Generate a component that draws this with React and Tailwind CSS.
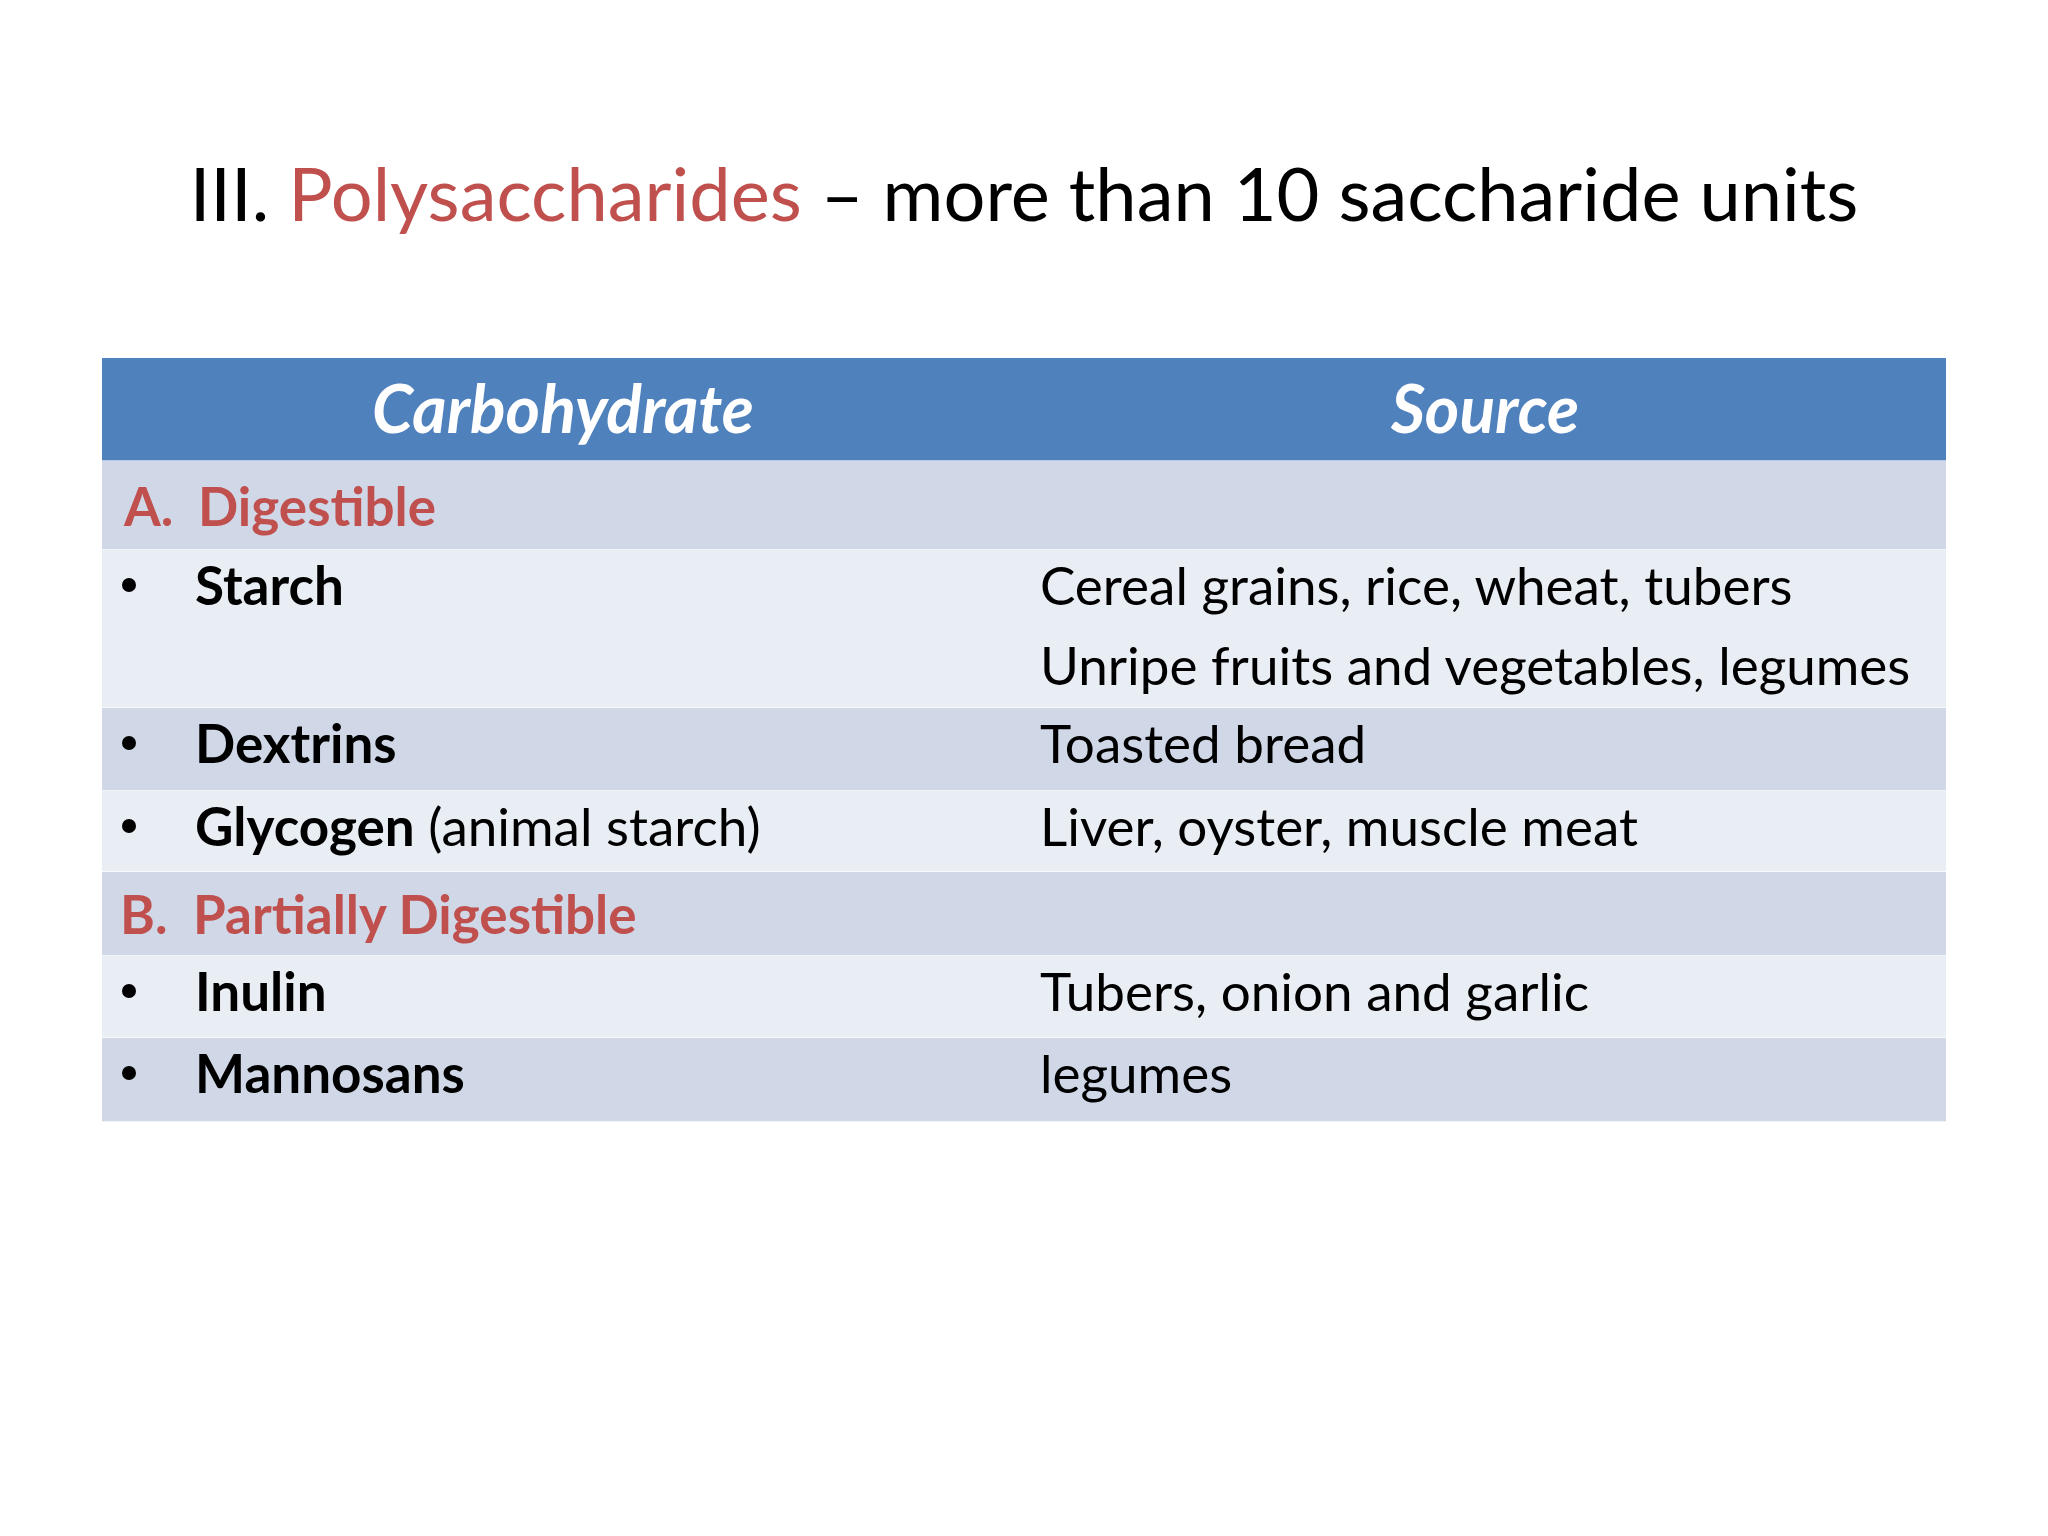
import React from 'react';

const font = { fontFamily: 'Lato, "Noto Sans", sans-serif' };

const Dot = () => (
  <div className="w-[93px] h-[68px] flex items-center pl-[20px] shrink-0">
    <span className="block w-[14px] h-[14px] rounded-full bg-black" />
  </div>
);

const ItemRow = ({ shade, name, extra, sources, h }) => (
  <div className={`flex border-b border-white/70 ${shade} ${h}`}>
    <div className="w-[922px] flex items-start pt-[1px]">
      <Dot />
      <div className="leading-[68px] text-[53px] text-black whitespace-nowrap">
        <span className="font-bold">{name}</span>
        {extra && <span> {extra}</span>}
      </div>
    </div>
    <div className="flex-1 pl-[16px] pt-[1px] flex flex-col gap-[12px]">
      {sources.map((s) => (
        <div key={s} className="leading-[68px] text-[53px] text-black whitespace-nowrap">{s}</div>
      ))}
    </div>
  </div>
);

const GroupRow = ({ letter, label, numW, pl, h }) => (
  <div className={`flex items-center bg-[#d0d8e8] border-b border-white/70 ${h}`}>
    <div className={`flex leading-[89px] text-[53px] font-bold text-[#c0504d] ${pl}`}>
      <span className={numW}>{letter}</span>
      <span>{label}</span>
    </div>
  </div>
);

export default function App() {
  return (
    <div className="w-[2048px] h-[1536px] bg-white overflow-hidden" style={font}>
      <div className="h-[358px] flex justify-center pt-[150px]">
        <h1 className="text-[74px] leading-[86px] font-normal text-black whitespace-nowrap">
          III. <span className="text-[#c0504d]">Polysaccharides</span> – more than 10 saccharide units
        </h1>
      </div>

      <div className="ml-[102px] w-[1844px]">
        <div className="flex h-[103px] bg-[#4f81bd] border-b border-white/60">
          <div className="w-[922px] text-center leading-[100px] text-[66px] font-bold italic text-white">Carbohydrate</div>
          <div className="flex-1 text-center leading-[100px] text-[66px] font-bold italic text-white">Source</div>
        </div>

        <GroupRow letter="A." label="Digestible" numW="w-[74px]" pl="pl-[22px]" h="h-[89px]" />
        <ItemRow shade="bg-[#e9edf4]" h="h-[158px]" name="Starch" sources={['Cereal grains, rice, wheat, tubers', 'Unripe fruits and vegetables, legumes']} />
        <ItemRow shade="bg-[#d0d8e8]" h="h-[83px]" name="Dextrins" sources={['Toasted bread']} />
        <ItemRow shade="bg-[#e9edf4]" h="h-[81px]" name="Glycogen" extra="(animal starch)" sources={['Liver, oyster, muscle meat']} />
        <GroupRow letter="B." label="Partially Digestible" numW="w-[73px]" pl="pl-[18px]" h="h-[84px]" />
        <ItemRow shade="bg-[#e9edf4]" h="h-[82px]" name="Inulin" sources={['Tubers, onion and garlic']} />
        <ItemRow shade="bg-[#d0d8e8]" h="h-[84px]" name="Mannosans" sources={['legumes']} />
      </div>
    </div>
  );
}
